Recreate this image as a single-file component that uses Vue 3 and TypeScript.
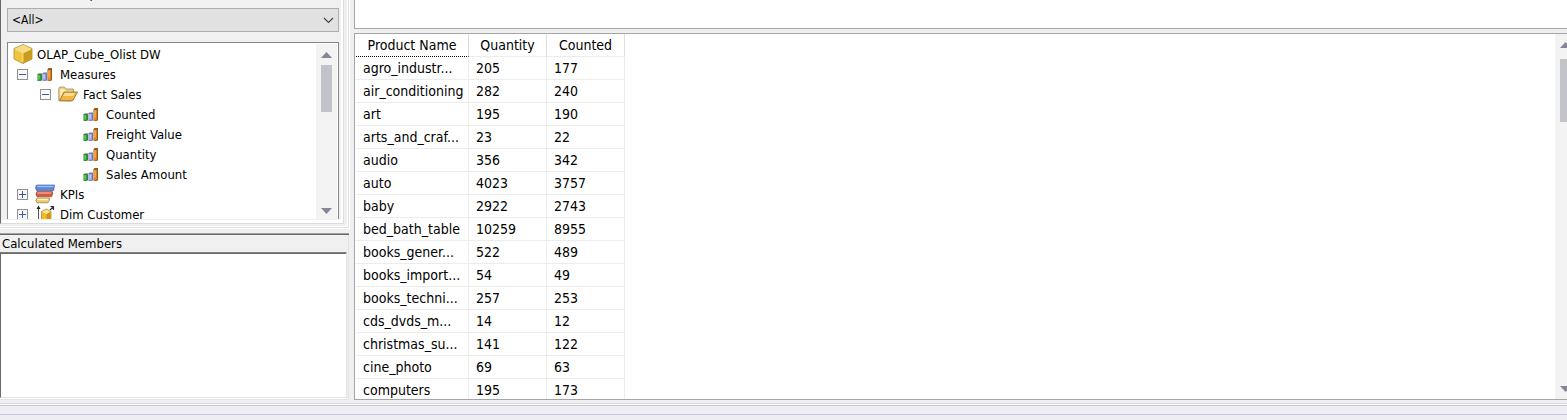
<script setup lang="ts">
import { computed, ref } from 'vue'

type IconKind = 'cube' | 'bars' | 'folder' | 'kpi' | 'dimension'

interface TreeNode {
  label: string
  icon: IconKind
  level: number
  expander?: 'open' | 'closed'
}

interface ResultRow {
  product: string
  quantity: number
  counted: number
}

const measureGroup = ref('<All>')

const nodes: TreeNode[] = [
  { label: 'OLAP_Cube_Olist DW', icon: 'cube', level: 0 },
  { label: 'Measures', icon: 'bars', level: 1, expander: 'open' },
  { label: 'Fact Sales', icon: 'folder', level: 2, expander: 'open' },
  { label: 'Counted', icon: 'bars', level: 3 },
  { label: 'Freight Value', icon: 'bars', level: 3 },
  { label: 'Quantity', icon: 'bars', level: 3 },
  { label: 'Sales Amount', icon: 'bars', level: 3 },
  { label: 'KPIs', icon: 'kpi', level: 1, expander: 'closed' },
  { label: 'Dim Customer', icon: 'dimension', level: 1, expander: 'closed' },
]

const data: [string, number, number][] = [
  ['agro_industr...', 205, 177],
  ['air_conditioning', 282, 240],
  ['art', 195, 190],
  ['arts_and_craf...', 23, 22],
  ['audio', 356, 342],
  ['auto', 4023, 3757],
  ['baby', 2922, 2743],
  ['bed_bath_table', 10259, 8955],
  ['books_gener...', 522, 489],
  ['books_import...', 54, 49],
  ['books_techni...', 257, 253],
  ['cds_dvds_m...', 14, 12],
  ['christmas_su...', 141, 122],
  ['cine_photo', 69, 63],
  ['computers', 195, 173],
]

const rows = computed<ResultRow[]>(() =>
  data.map(([product, quantity, counted]) => ({ product, quantity, counted })),
)
</script>

<template>
  <div class="designer">
    <div class="workspace">
      <aside class="side">
        <section class="metadata">
          <div class="metadata-inner">
            <div class="group-label"><label for="measure-group">Measure Group:</label></div>
            <div class="combo">
              <select id="measure-group" v-model="measureGroup">
                <option>&lt;All&gt;</option>
              </select>
              <svg class="chevron" width="11" height="7" viewBox="0 0 11 7" aria-hidden="true">
                <path d="M1 1l4.500 4.500L10 1" fill="none" stroke="#444" stroke-width="1.200" />
              </svg>
            </div>
            <div class="tree-box">
              <ul class="tree">
                <li v-for="node in nodes" :key="node.label + node.level" :class="'level-' + node.level">
                  <button
                    v-if="node.expander"
                    class="expander"
                    type="button"
                    :aria-label="node.label"
                    :aria-expanded="node.expander === 'open'"
                  >
                    <svg width="11" height="11" viewBox="0 0 11 11">
                      <rect x="0.500" y="0.500" width="10" height="10" fill="#f8f8f8" stroke="#919191" />
                      <path d="M2 5.500h7" stroke="#3b5ba5" />
                      <path v-if="node.expander === 'closed'" d="M5.500 2v7" stroke="#3b5ba5" />
                    </svg>
                  </button>
                  <span class="icon">
                    <svg v-if="node.icon === 'cube'" width="20" height="20" viewBox="0 0 20 20">
                      <path d="M10 .5l9 4v10.500l-9 4.500-9-4.500V4.500z" fill="#d9a514" stroke="#a88a3a" stroke-width=".8" />
                      <path d="M10 .8l8.500 4L10 9 1.500 4.800z" fill="#f5dc85" />
                      <path d="M1.500 5L10 9v10l-8.500-4.200z" fill="#efc53a" />
                      <path d="M18.500 5L10 9v10l8.500-4.200z" fill="#c99a1c" />
                      <path d="M2 5l8 4 8-4M10 9v9" fill="none" stroke="#fff0b0" stroke-width=".7" />
                    </svg>
                    <svg v-else-if="node.icon === 'bars'" width="16" height="16" viewBox="0 0 16 16">
                      <path d="M.5 8.500l1-1H5v6.500l-1 1H.5z" fill="#3d7a3d" />
                      <path d="M1 9h2.500v5.500H1z" fill="#2fb82f" />
                      <path d="M1.500 9.500h1v3h-1z" fill="#7be07b" />
                      <path d="M5.500 7.500l1-1H10v7.500l-1 1H5.500z" fill="#7478a8" />
                      <path d="M6 8h2.800v6.500H6z" fill="#9fa5ea" />
                      <path d="M6.500 8.500h1.200v4H6.500z" fill="#d0d4ff" />
                      <path d="M10.500 3.500l1-1.500H15v12l-1 1h-3.500z" fill="#8f5a24" />
                      <path d="M11 4h2.800v10.500H11z" fill="#e8851c" />
                      <path d="M11.500 4.500h1.200v7h-1.200z" fill="#fbb964" />
                    </svg>
                    <svg v-else-if="node.icon === 'folder'" width="20" height="16" viewBox="0 0 20 16">
                      <path d="M.8 14.500V2l1-1h4.500l1.500 2h7.700v3.500L13 15z" fill="#ecd08a" stroke="#a58a55" stroke-width=".8" />
                      <path d="M2 3h4l2 2h6v2H5l-3 5z" fill="#fbe9b4" />
                      <path d="M1.500 14.800L6 6h13.500l-4.800 8.800z" fill="#f2b541" stroke="#8b651f" stroke-width=".8" />
                      <path d="M6.800 7H17l-2 3H5.200z" fill="#fbdc92" />
                    </svg>
                    <svg v-else-if="node.icon === 'kpi'" width="20" height="20" viewBox="0 0 20 20">
                      <path d="M1.500 1h18l-.8 5.500H1.500Q-.5 3.800 1.500 1z" fill="#5a85d8" stroke="#4a68a8" stroke-width=".7" />
                      <path d="M2 2.500h16.500" stroke="#9dbcf2" stroke-width="1.500" />
                      <path d="M2 7.500h15.500q1 2.500-1 5.300H2Q0 10 2 7.500z" fill="#d9573f" stroke="#9b4a3b" stroke-width=".7" />
                      <path d="M2.500 9H16" stroke="#f0a08c" stroke-width="1.500" />
                      <path d="M2 14h12.500q.5 2.500-1.500 4.800H2Q0 16.500 2 14z" fill="#e1ca72" stroke="#96833f" stroke-width=".7" />
                      <path d="M2.500 15.500h10.500" stroke="#fff3ba" stroke-width="1.500" />
                    </svg>
                    <svg v-else width="20" height="20" viewBox="0 0 20 20">
                      <path d="M3.500 20V3" stroke="#555" fill="none" />
                      <path d="M1.500 5l2-3.500L5.500 5z" fill="#222" />
                      <path d="M15 6l3-3M15.500 2.500H18.500V6" stroke="#333" stroke-width="1.200" fill="none" />
                      <path d="M6.500 7.500L11.500 5l4.500 2.500v7.500l-4.500 3-5-3z" fill="#eebb20" stroke="#b08a35" stroke-width=".8" />
                      <path d="M7 8l4.500-2.500 4 2.500-4 2z" fill="#fae79d" />
                      <path d="M11.500 10l4-2v6.500l-4 2.500z" fill="#cf951a" />
                    </svg>
                  </span>
                  <span class="node-label">{{ node.label }}</span>
                </li>
              </ul>
              <div class="scrollbar tree-scroll">
                <svg width="11" height="6" viewBox="0 0 11 6"><path d="M5.500 0L11 6H0z" fill="#858698" /></svg>
                <div class="thumb"></div>
                <svg class="down" width="11" height="6" viewBox="0 0 11 6"><path d="M5.500 6L11 0H0z" fill="#858698" /></svg>
              </div>
            </div>
          </div>
        </section>
        <section class="members">
          <h2>Calculated Members</h2>
          <div class="members-list"></div>
        </section>
      </aside>

      <main class="main">
        <div class="filter-pane"></div>
        <div class="result">
          <div class="table-area">
            <table>
              <thead>
                <tr>
                  <th class="name focused" scope="col">Product Name</th>
                  <th scope="col">Quantity</th>
                  <th scope="col">Counted</th>
                </tr>
              </thead>
              <tbody>
                <tr v-for="row in rows" :key="row.product">
                  <td>{{ row.product }}</td>
                  <td>{{ row.quantity }}</td>
                  <td>{{ row.counted }}</td>
                </tr>
              </tbody>
            </table>
          </div>
          <div class="scrollbar result-scroll">
            <svg width="11" height="6" viewBox="0 0 11 6"><path d="M5.500 0L11 6H0z" fill="#858698" /></svg>
            <div class="thumb"></div>
            <svg class="down" width="11" height="6" viewBox="0 0 11 6"><path d="M5.500 6L11 0H0z" fill="#858698" /></svg>
          </div>
        </div>
      </main>
    </div>
    <footer class="status"></footer>
  </div>
</template>

<style>
body {
  margin: 0;
}
</style>

<style scoped>
* {
  box-sizing: border-box;
}

.designer {
  display: flex;
  flex-direction: column;
  height: 100vh;
  overflow: hidden;
  background: #f0f0f0;
  color: #000;
  font-family: "DejaVu Sans Condensed", "DejaVu Sans", sans-serif;
  font-size: 14px;
}

.workspace {
  display: flex;
  flex: 1;
  min-height: 0;
}

.side {
  display: flex;
  flex-direction: column;
  width: 350px;
  flex: none;
}

.metadata {
  height: 229px;
  flex: none;
  padding: 0 1px 1px 0;
  border: solid #fff;
  border-width: 0 1px 1px 0;
  box-shadow: inset -1px -1px #e3e3e3, inset -2px -2px #fff;
}

.metadata-inner {
  display: flex;
  flex-direction: column;
  height: 224px;
  width: 344px;
  padding: 0 5px 4px;
  border: solid #dcdcdc;
  border-width: 0 1px 1px;
  border-left-color: #696969;
  box-shadow: inset -2px -3px #fff;
}

.group-label {
  display: flex;
  flex-direction: column;
  justify-content: flex-end;
  height: 2px;
  margin: 0 2px 6px;
  overflow: hidden;
  font-size: 13px;
  line-height: 16px;
}

.combo {
  position: relative;
  height: 24px;
  flex: none;
  margin: 0 -1px 10px 1px;
}

.combo select {
  appearance: none;
  width: 100%;
  height: 100%;
  padding: 0 24px 0 4px;
  border: 1px solid #adadad;
  border-radius: 0;
  background: #e1e1e1;
  color: #000;
  font: inherit;
  font-size: 12px;
}

.chevron {
  position: absolute;
  right: 5px;
  top: 9px;
  pointer-events: none;
}

.tree-box {
  display: flex;
  flex: 1;
  min-height: 0;
  margin: 0 -1px 0 1px;
  padding: 1px 1px 0 0;
  border: solid #828790;
  border-width: 1px 1px 0;
  background: #fff;
}

.tree {
  flex: 1;
  min-width: 0;
  margin: 0;
  padding: 0 0 0 5px;
  overflow: hidden;
  list-style: none;
  font-size: 13px;
}

.tree li {
  display: flex;
  align-items: center;
  height: 20px;
}

.tree .level-1 {
  padding-left: 4px;
}

.tree .level-2 {
  padding-left: 27px;
}

.tree .level-3 {
  padding-left: 67px;
}

.expander {
  display: flex;
  width: 11px;
  height: 11px;
  margin-right: 6px;
  padding: 0;
  border: 0;
  background: none;
}

.icon {
  display: flex;
  justify-content: center;
  width: 22px;
  flex: none;
  margin-right: 4px;
}

.level-0 .icon {
  width: 20px;
}

.node-label {
  padding-top: 1px;
  white-space: nowrap;
}

.scrollbar {
  display: flex;
  flex-direction: column;
  flex: none;
  background: #f3f3f3;
}

.scrollbar svg {
  flex: none;
}

.thumb {
  width: 11px;
  background: #c2c3c9;
}

.down {
  margin-top: auto;
}

.tree-scroll {
  width: 21px;
  padding: 8px 5px 5px;
}

.tree-scroll .thumb {
  height: 47px;
  margin-top: 7px;
}

.members {
  display: flex;
  flex: 1;
  flex-direction: column;
  min-height: 0;
  margin: 4px 1px 0 0;
  padding-right: 2px;
  border-top: 1px solid #a0a0a0;
  box-shadow: inset 0 1px #696969, inset -1px 0 #e3e3e3;
}

.members h2 {
  margin: 0;
  padding: 2px 2px 0;
  font-size: 13px;
  font-weight: 400;
  line-height: 16px;
}

.members-list {
  flex: 1;
  margin-bottom: 2px;
  border: solid;
  border-width: 1px;
  border-color: #808080 #e3e3e3 #e3e3e3 #696969;
  background: #fff;
  box-shadow: inset 0 1px #696969, 0 1px #fff, 0 2px #e3e3e3;
}

.main {
  display: flex;
  flex: 1;
  flex-direction: column;
  min-width: 0;
  padding-left: 4px;
}

.filter-pane {
  height: 29px;
  flex: none;
  margin-bottom: 4px;
  border: solid #a5a5a9;
  border-width: 0 0 1px 1px;
  background: #fff;
}

.result {
  display: flex;
  flex: 1;
  min-height: 0;
  overflow: hidden;
  border: solid #a5a5a9;
  border-width: 1px 0 1px 1px;
  background: #fff;
}

.table-area {
  flex: 1;
  min-width: 0;
  padding-left: 1px;
  overflow: hidden;
}

table {
  border-collapse: separate;
  border-spacing: 0;
  table-layout: fixed;
  width: 269px;
}

th,
td {
  height: 23px;
  padding: 0 0 0 7px;
  border: solid #ececec;
  border-width: 0 1px 1px 0;
  font-weight: 400;
  line-height: 20px;
  text-align: left;
  white-space: nowrap;
}

th {
  padding: 0;
  border-right-color: #dedede;
  text-align: center;
}

.name {
  width: 113px;
}

.focused {
  border-bottom: 1px dotted #000;
}

.result-scroll {
  width: 12px;
  padding: 8px 0 7px 5px;
  overflow: hidden;
}

.result-scroll .thumb {
  height: 63px;
  margin-top: 11px;
}

.status {
  height: 17px;
  flex: none;
  margin-top: 3px;
  border-top: 1px solid #dcdcdc;
  background: linear-gradient(#fff 0 1px, #c8c8d8 1px 2px, #ededf3 2px 10px, #c8c8dc 10px 11px, #ededf3 11px);
}
</style>
